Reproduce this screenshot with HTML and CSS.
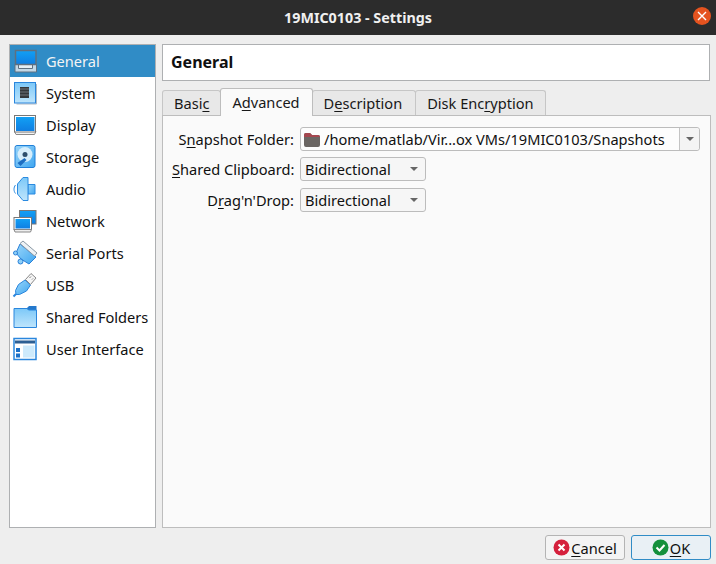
FILE: index.html
```html
<!DOCTYPE html>
<html>
  <head>
    <meta charset="utf-8">
    <title>19MIC0103 - Settings</title>
    <link rel="stylesheet" href="styles.css">
  </head>
  <body>
    <!-- shared icon gradients -->
    <svg class="defs" width="0" height="0">
      <defs>
        <linearGradient id="blue" x1="0" y1="0" x2="0" y2="1"><stop offset="0" stop-color="#12a0f4"/><stop offset="1" stop-color="#0f7ee2"/></linearGradient>
        <linearGradient id="sky" x1="0" y1="0" x2="0" y2="1"><stop offset="0" stop-color="#7cc8f8"/><stop offset="1" stop-color="#bfe5fc"/></linearGradient>
        <linearGradient id="mid" x1="0" y1="0" x2="1" y2="1"><stop offset="0" stop-color="#9ad6fa"/><stop offset="1" stop-color="#3fa6f0"/></linearGradient>
      </defs>
    </svg>

    <div id="titlebar">
      <span class="title">19MIC0103 - Settings</span>
      <span class="close">
        <svg width="10" height="10" viewBox="0 0 10 10"><path d="M1 1L9 9M9 1L1 9" stroke="#fff" stroke-width="1.4"/></svg>
      </span>
    </div>

    <div id="main">
      <div id="sidebar">
        <div class="item selected">
          <svg class="icon" width="24" height="24" viewBox="0 0 24 24"><path d="M1 15.500h21.500V23H1z" fill="#c4d8e6" stroke="#5f7080"/><path d="M4.500 16v3.500h14V16" fill="#e6eff5" stroke="#5f7080"/><rect x="1.500" y="1.500" width="20.500" height="14" fill="url(#blue)" stroke="#5f7080" stroke-width="1.500"/></svg>
          <span>General</span>
        </div>
        <div class="item">
          <svg class="icon" width="24" height="24" viewBox="0 0 24 24"><path d="M22.500 3v20H2.500" fill="none" stroke="#b0bac2"/><rect x="0.500" y="1.500" width="21" height="20.500" fill="url(#sky)" stroke="#2a86dd"/><rect x="6" y="6" width="9" height="11" fill="#34383c"/><path d="M6 8h9M6 11h9M6 14h9" stroke="#8b9096" stroke-width="0.700"/></svg>
          <span>System</span>
        </div>
        <div class="item">
          <svg class="icon" width="24" height="24" viewBox="0 0 24 24"><path d="M0.500 18.500h21.500l-1.500 3H2z" fill="#f2f2f2" stroke="#8a8a8a"/><rect x="0.500" y="2.500" width="21" height="16.500" fill="#fff" stroke="#777"/><rect x="2" y="4" width="18.500" height="14" fill="url(#blue)"/></svg>
          <span>Display</span>
        </div>
        <div class="item">
          <svg class="icon" width="24" height="24" viewBox="0 0 24 24"><rect x="1" y="0.500" width="20" height="22" rx="2" fill="url(#mid)" stroke="#1f7fd8"/><circle cx="11" cy="9.500" r="7.500" fill="#d6eefc"/><circle cx="11" cy="9.500" r="2.500" fill="#2d4f6d"/><path d="M3.500 18l7-5 2 2-6 6z" fill="#1d6ec2"/></svg>
          <span>Storage</span>
        </div>
        <div class="item">
          <svg class="icon" width="24" height="24" viewBox="0 0 24 24"><path d="M14 7.500h7v9.500h-7z" fill="url(#mid)" stroke="#2a8ae0"/><path d="M3.500 7l5.500-6.500h5v23H9l-5.500-6.500z" fill="url(#sky)" stroke="#2a8ae0"/><path d="M1.500 8c-2 2.500-2 6 0 8.500" fill="none" stroke="#2a8ae0"/></svg>
          <span>Audio</span>
        </div>
        <div class="item">
          <svg class="icon" width="24" height="24" viewBox="0 0 24 24"><rect x="5.500" y="1.500" width="16.500" height="13.500" fill="url(#blue)" stroke="#777"/><rect x="0" y="8.500" width="17.500" height="12" fill="#fff" stroke="#777"/><rect x="1.500" y="10" width="14.500" height="9.500" fill="url(#blue)"/><path d="M0 20.500h17.500l-1 2.500H1z" fill="#eee" stroke="#888"/></svg>
          <span>Network</span>
        </div>
        <div class="item">
          <svg class="icon" width="24" height="24" viewBox="0 0 24 24"><path d="M6 3l16 13-7 7-8-5-5-6z" fill="url(#mid)" stroke="#2a80d8"/><path d="M6 2.500L9 0l14 12-2.500 3z" fill="#eef2f5" stroke="#8a98a4"/><circle cx="1.500" cy="12" r="2" fill="#8ed0f8" stroke="#2a80d8"/><circle cx="6.500" cy="20.500" r="2.500" fill="#8ed0f8" stroke="#2a80d8"/></svg>
          <span>Serial Ports</span>
        </div>
        <div class="item">
          <svg class="icon" width="24" height="24" viewBox="0 0 24 24"><path d="M11 7l5.500 5-4 6-7 3.500H2l-.5-4 3-6z" fill="url(#mid)" stroke="#2a86dd"/><path d="M11.500 6.500L17 .5l5 4.500-5.500 6.500z" fill="#f6f6f6" stroke="#888"/><path d="M15.500 5l1.500-1.500M18 6.500l1-1" stroke="#777"/><path d="M-.5 23.500L2 21" stroke="#2a86dd" stroke-width="2"/></svg>
          <span>USB</span>
        </div>
        <div class="item">
          <svg class="icon" width="24" height="24" viewBox="0 0 24 24"><path d="M13 3l2-2h7.500v5H13z" fill="#2478cc"/><path d="M0 3.500h13l1.500 1.500h8v17.500H0z" fill="url(#sky)" stroke="#2a86dd"/></svg>
          <span>Shared Folders</span>
        </div>
        <div class="item">
          <svg class="icon" width="24" height="24" viewBox="0 0 24 24"><rect x="0" y="1.500" width="22" height="21" fill="#fff" stroke="#2a86dd" stroke-width="1.500"/><rect x="1" y="3.500" width="20" height="3" fill="#2c5f94"/><rect x="9" y="8.500" width="11.500" height="12" fill="#cdeafc"/><rect x="2" y="11" width="4" height="4" fill="#1a70c8"/><rect x="2" y="16.500" width="4" height="4" fill="#1a70c8"/></svg>
          <span>User Interface</span>
        </div>
      </div>

      <div id="content">
        <div id="header">General</div>

        <div id="tabs">
          <div class="tab">Basi<u>c</u></div>
          <div class="tab active">A<u>d</u>vanced</div>
          <div class="tab wide">D<u>e</u>scription</div>
          <div class="tab">Disk Enc<u>r</u>yption</div>
        </div>

        <div id="panel">
          <div class="row">
            <label>S<u>n</u>apshot Folder:</label>
            <div class="path">
              <svg width="16" height="15" viewBox="0 0 16 15"><path d="M0 3a2 2 0 0 1 2-2h4l2 2h6a2 2 0 0 1 2 2v8a2 2 0 0 1-2 2H2a2 2 0 0 1-2-2z" fill="#6b6663"/><path d="M0 3a2 2 0 0 1 2-2h4l2 2h6a2 2 0 0 1 2 2H0z" fill="#a5474f"/></svg>
              <span class="path-text">/home/matlab/Vir...ox VMs/19MIC0103/Snapshots</span>
              <span class="path-btn"><i class="arrow"></i></span>
            </div>
          </div>
          <div class="row">
            <label><u>S</u>hared Clipboard:</label>
            <div class="combo">Bidirectional<i class="arrow"></i></div>
          </div>
          <div class="row">
            <label>D<u>r</u>ag'n'Drop:</label>
            <div class="combo">Bidirectional<i class="arrow"></i></div>
          </div>
        </div>
      </div>
    </div>

    <div id="buttons">
      <div class="btn">
        <svg width="17" height="17" viewBox="0 0 17 17"><circle cx="8.500" cy="8.500" r="8" fill="#d5203c"/><path d="M5.500 5.500l6 6M11.500 5.500l-6 6" stroke="#fff" stroke-width="2"/></svg>
        <span><u>C</u>ancel</span>
      </div>
      <div class="btn default">
        <svg width="17" height="17" viewBox="0 0 17 17"><circle cx="8.500" cy="8.500" r="8" fill="#14903c"/><path d="M4.500 8.500l3 3 5-5.500" fill="none" stroke="#fff" stroke-width="2"/></svg>
        <span><u>O</u>K</span>
      </div>
    </div>
  </body>
</html>
```

FILE: styles.css
```css
html, body{
  margin: 0;
  padding: 0;
}

body{
  width: 716px;
  height: 564px;
  overflow: hidden;
  background: #eeeeee;
  font-family: "Noto Sans", sans-serif;
  font-size: 14.6px;
  color: #101010;
}

u{
  text-underline-offset: 2px;
}

.defs{
  position: absolute;
}

#titlebar{
  height: 35px;
  background: #2c2c2c;
  display: flex;
  align-items: center;
  justify-content: center;
  position: relative;
}

.title{
  color: #f0f0f0;
  font-weight: 700;
  font-size: 14.3px;
}

.close{
  position: absolute;
  right: 5px;
  top: 7px;
  width: 18px;
  height: 18px;
  border-radius: 50%;
  background: #e5531f;
  display: flex;
  align-items: center;
  justify-content: center;
}

#main{
  display: flex;
  gap: 6px;
  padding: 9px 5px 0 9px;
  height: 484px;
}

#sidebar{
  flex: none;
  width: 145px;
  height: 482px;
  background: #fff;
  border: 1px solid #aeb0b2;
}

.item{
  height: 32px;
  display: flex;
  align-items: center;
  gap: 8px;
  padding-left: 4px;
  white-space: nowrap;
}

.item.selected{
  background: #308cc6;
  color: #f4f4f4;
}

.icon{
  flex: none;
  overflow: visible;
}

#content{
  flex: 1;
  display: flex;
  flex-direction: column;
}

#header{
  height: 35px;
  line-height: 35px;
  background: #fff;
  border: 1px solid #aeb0b2;
  margin-right: 1px;
  padding-left: 8px;
  font-weight: 700;
  font-size: 16px;
}

#tabs{
  display: flex;
  padding-top: 8px;
  height: 26px;
  align-items: flex-end;
  position: relative;
  z-index: 1;
}

.tab{
  height: 24px;
  line-height: 25px;
  padding: 0 11px;
  background: #e8e8e8;
  border: 1px solid #c6c6c6;
  border-bottom: none;
  border-radius: 3px 3px 0 0;
  margin-left: -1px;
  color: #181818;
}

.tab:first-child{
  margin-left: 0;
}

.wide{
  padding-right: 13px;
}

.active{
  height: 27px;
  line-height: 27px;
  background: #fafafa;
  padding: 0 12px 0 11px;
  margin-bottom: -1px;
  border-color: #bdbdbd;
  position: relative;
  z-index: 2;
}

#panel{
  flex: 1;
  background: #fafafa;
  border: 1px solid #bdbdbd;
  padding: 11px 9px;
}

.row{
  height: 30px;
  display: flex;
  align-items: flex-start;
  gap: 6px;
}

.row:last-child{
  margin-top: 1px;
}

.row label{
  width: 122px;
  height: 24px;
  line-height: 24px;
  white-space: pre;
  display: block;
  text-align: right;
}

.path, .combo{
  height: 22px;
  line-height: 22px;
  border: 1px solid #bcbcbc;
  border-radius: 3px;
  background: #f6f6f6;
  display: flex;
  align-items: center;
}

.path{
  width: 395px;
  padding-left: 3px;
  background: #fdfdfd;
}

.path-text{
  flex: 1;
  margin-left: 4px;
  white-space: nowrap;
}

.path-btn{
  width: 19px;
  height: 22px;
  border-left: 1px solid #c4c4c4;
  display: flex;
  align-items: center;
  justify-content: center;
  background: #f4f4f4;
  border-radius: 0 3px 3px 0;
}

.combo{
  width: 120px;
  padding-left: 4px;
  justify-content: space-between;
}

.combo .arrow{
  margin-right: 7px;
}

.arrow{
  display: block;
  width: 0;
  height: 0;
  border-left: 4px solid transparent;
  border-right: 4px solid transparent;
  border-top: 4px solid #666;
}

#buttons{
  display: flex;
  justify-content: flex-end;
  gap: 6px;
  padding: 7px 5px 0 0;
}

.btn{
  width: 78px;
  height: 23px;
  border: 1px solid #b4b4b4;
  border-radius: 3px;
  background: #f4f4f4;
  display: flex;
  align-items: center;
  justify-content: center;
  gap: 1px;
}

.default{
  border-color: #308cc6;
  background: #e9f0f5;
}
```
